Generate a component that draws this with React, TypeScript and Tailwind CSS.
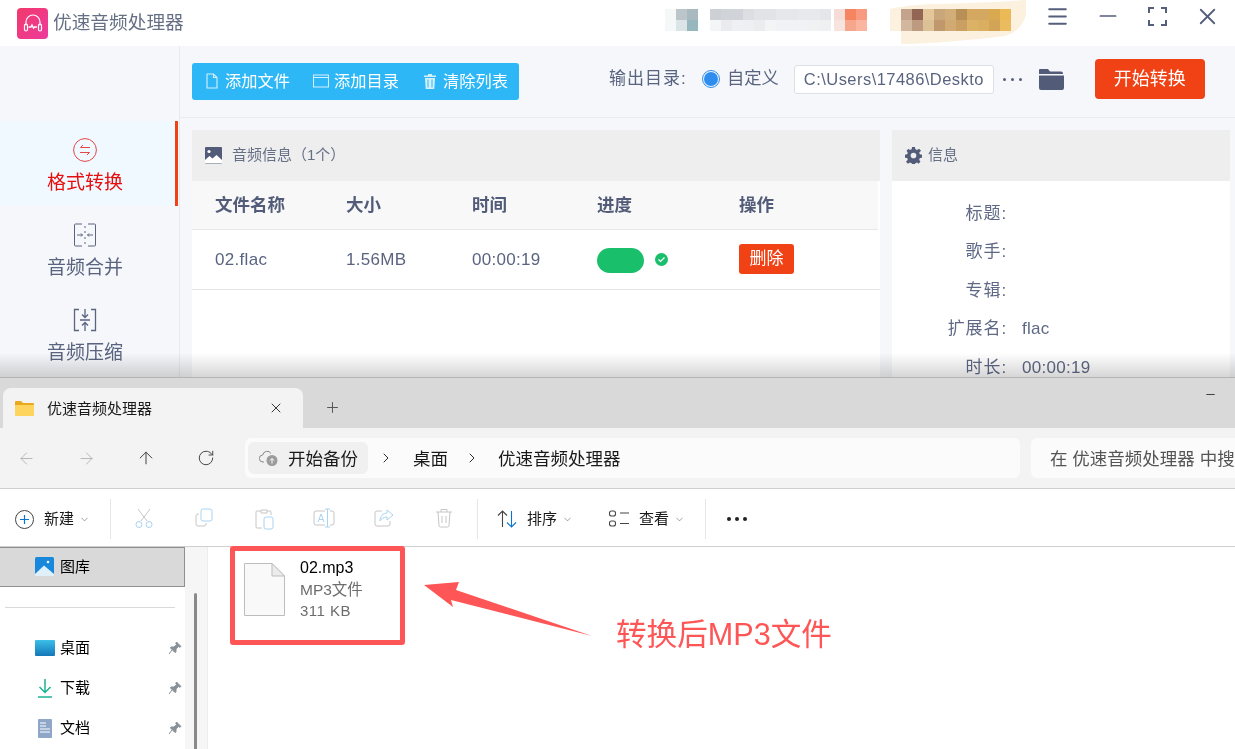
import { ArrowLeft, ArrowRight, ArrowUp, ChevronDown, ChevronRight, Menu, Minus, Plus, RotateCw, X } from "lucide-react";

const mosaicOne = [
  ["#f6f8f8", "#bcc5ca", "#a9b9c0"],
  ["#f5f8f8", "#dbe5e8", "#97b7bf"],
];
const mosaicTwoTop = ["#cdd0d5", "#d0d3d8", "#d0d3d8", "#dcdee2", "#e1e3e7", "#e1e3e7", "#e5e7ea", "#e5e7ea", "#e7e9ec", "#e7e9ec", "#e4e6e9", "#f5dcd6", "#f58460", "#f89a80"];
const mosaicTwoBottom = ["#f3f5f7", "#eaebee", "#eff0f3", "#eeeff2", "#ebecef", "#f3f4f6", "#f1f2f5", "#f1f2f5", "#f1f2f5", "#f0f1f3", "#eef0f2", "#f8e4df", "#f7a68e", "#fab4a0"];
const mosaicThreeTop = ["#c4a38c", "#936553", "#e3c79b", "#c9a77a", "#d1ae79", "#b98f58", "#d4a860", "#d4a860", "#d9a950", "#ebb956"];
const mosaicThreeBottom = ["#d2b79e", "#bd9a80", "#dcc096", "#c0986c", "#d0aa72", "#c9a062", "#dcb266", "#daaf62", "#d3a455", "#ebbb5f"];

function BlurredUser() {
  return (
    <svg width="380" height="46" viewBox="0 0 380 46" className="shrink-0">
      {mosaicOne.map((row, r) => row.map((c, i) => <rect key={`a${r}${i}`} x={i * 11} y={9 + r * 11} width="11" height="11" fill={c} />))}
      {mosaicTwoTop.map((c, i) => <rect key={`b${i}`} x={45 + i * 11 + (i > 10 ? 3 : 0)} y="9" width="11" height="11" fill={c} />)}
      {mosaicTwoBottom.map((c, i) => <rect key={`c${i}`} x={45 + i * 11 + (i > 10 ? 3 : 0)} y="20" width="11" height="11" fill={c} />)}
      <path d="M225 9 Q240 5 270 4 Q320 3 361 0 V14 Q358 30 340 36 Q300 41 245 44 H236 V31 H225 Z" fill="#fbf1de" />
      {mosaicThreeTop.map((c, i) => <rect key={`d${i}`} x={236 + i * 11} y="9" width="11" height="11" fill={c} />)}
      {mosaicThreeBottom.map((c, i) => <rect key={`e${i}`} x={236 + i * 11} y="20" width="11" height="11" fill={c} />)}
    </svg>
  );
}

function NavItem({ label, active, children }: { label: string; active?: boolean; children: React.ReactNode }) {
  return (
    <div className={active ? "h-[85px] flex flex-col items-center pt-[17px] pr-[5px] bg-[#f0f9ff] border-r-[3px] border-[#f04214] mr-[1px] text-[#e60f0f]" : "h-[85px] flex flex-col items-center pt-[17px] pr-[8px] mr-[1px] text-[#5a6480]"}>
      {children}
      <span className="text-[19px] leading-[26px] mt-[8px]">{label}</span>
    </div>
  );
}

function InfoRow({ label, value }: { label: string; value?: string }) {
  return (
    <div className="h-[38.5px] flex items-center">
      <span className="w-[115px] text-right text-[17px] tracking-[.9px] leading-none">{label}:</span>
      <span className="ml-[15px] text-[17px] tracking-[.3px] leading-none">{value}</span>
    </div>
  );
}

function ToolSlot({ children }: { children: React.ReactNode }) {
  return <div className="w-[60px] flex justify-center shrink-0">{children}</div>;
}

function SideRow({ label, children }: { label: string; children: React.ReactNode }) {
  return (
    <div className="h-[40px] flex items-center pl-[35px] pr-[3px]">
      <div className="w-[25px] shrink-0">{children}</div>
      <span className="text-[15px] text-black">{label}</span>
      <svg width="14" height="14" viewBox="0 0 14 14" className="ml-auto">
        <path d="M8.5 1 13 5.5 11.8 6.2 10.5 5.5 8 8 8 11 7 11.5 2.5 7 3 6 6 6 8.5 3.5 7.8 2.2Z M4 9 1 13" fill="#8a9299" stroke="#8a9299" />
      </svg>
    </div>
  );
}

export default function App() {
  return (
    <div className="relative w-[1235px] h-[749px] overflow-hidden bg-white font-['Liberation_Sans','Noto_Sans_CJK_SC',sans-serif]">
      {/* audio tool window */}
      <div className="relative h-[377px] overflow-hidden bg-[#f5f7fa] text-[#5a6480]">
        <header className="h-[46px] bg-white flex items-center pl-[17px]">
          <div className="w-[31px] h-[31px] rounded-[4px] bg-gradient-to-br from-[#f2386a] to-[#ec3b9c] flex items-center justify-center shrink-0">
            <svg width="24" height="24" viewBox="0 0 24 24" fill="none" stroke="#fff" strokeWidth="1.2" strokeLinecap="round">
              <path d="M5 14V11a7 7 0 0 1 14 0v3" />
              <rect x="3.5" y="13" width="3" height="7" rx="1.5" />
              <rect x="17.5" y="13" width="3" height="7" rx="1.5" />
              <path d="M8 16h2l1-2 1.5 3 1-1h2" strokeWidth="1.4" />
            </svg>
          </div>
          <span className="ml-[5px] text-[18.7px] text-[#667085]">优速音频处理器</span>
          <div className="ml-[481px]">
            <BlurredUser />
          </div>
          <div className="absolute right-[14px] top-0 h-[32px] flex items-center text-[#555f7b]">
            <Menu size={25} strokeWidth={1.8} />
            <Minus size={26} strokeWidth={1.6} className="ml-[25px]" />
            <svg width="19" height="19" viewBox="0 0 19 19" fill="none" stroke="currentColor" strokeWidth="2" className="ml-[27px]">
              <path d="M1 6V1h5M13 1h5v5M18 13v5h-5M6 18H1v-5" />
            </svg>
            <X size={27} strokeWidth={1.6} className="ml-[27px]" />
          </div>
        </header>

        <div className="flex h-[331px]">
          <aside className="w-[180px] border-r border-[#e8eaee] pt-[75px] shrink-0">
            <NavItem label="格式转换" active>
              <svg width="24" height="24" viewBox="0 0 24 24" fill="none" stroke="#e64545" strokeWidth="1">
                <circle cx="12" cy="12" r="11.4" />
                <path d="M17 9.5H7.5L10 7M7 14.5h9.5L14 17" />
              </svg>
            </NavItem>
            <NavItem label="音频合并">
              <svg width="24" height="24" viewBox="0 0 24 24" fill="none" stroke="#5a6480" strokeWidth="1">
                <path d="M9 1H2.5A1 1 0 0 0 1.500 2v20a1 1 0 0 0 1 1H9M15 1h6.500a1 1 0 0 1 1 1v20a1 1 0 0 1-1 1H15M12 3v2M12 8v2M12 14v2M12 19v2" />
                <path d="M4 12h5.500L8 10.500M9.500 12 8 13.500M20 12h-5.500L16 10.500M14.500 12 16 13.500" />
              </svg>
            </NavItem>
            <NavItem label="音频压缩">
              <svg width="24" height="24" viewBox="0 0 24 24" fill="none" stroke="#5a6480" strokeWidth="1.3">
                <path d="M6 1.500H1.500v21H6M18 1.500h4.500v21H18" />
                <path d="M12 1v8M9 6.500 12 9.500 15 6.500M7 12h10M12 23v-8M9 17.500 12 14.500 15 17.500" />
              </svg>
            </NavItem>
          </aside>

          <main className="flex-1 min-w-0">
            <div className="h-[72px] flex items-center border-b border-[#e9ebee] pl-[12px]">
              <div className="w-[327px] h-[37px] -mt-[1px] rounded-[3px] bg-[#2eb7f6] text-white flex items-center pl-[14px] text-[16.25px] shrink-0">
                <svg width="12" height="16" viewBox="0 0 12 16" fill="none" stroke="#d5f0fd" strokeWidth="1.1"><path d="M1 1h6.500L11 4.500V15H1ZM7.500 1v3.500H11" /></svg>
                <span className="ml-[7px]">添加文件</span>
                <svg width="16" height="14" viewBox="0 0 16 14" fill="none" stroke="#d5f0fd" strokeWidth="1.1" className="ml-[23px]"><path d="M.5 1h15v12H.5ZM.5 3.500h15" /></svg>
                <span className="ml-[5px]">添加目录</span>
                <svg width="12" height="15" viewBox="0 0 12 15" fill="#d5f0fd" className="ml-[25px]"><path d="M4 0h4v1.500h4V3H0V1.500h4ZM1 4h10l-.7 11H1.700ZM3.500 5.500v8h1v-8Zm4 0v8h1v-8Z" /></svg>
                <span className="ml-[7px]">清除列表</span>
              </div>
              <div className="flex items-center -mt-[5px]">
                <span className="ml-[90px] w-[78px] text-[17px] tracking-[1px] whitespace-nowrap shrink-0">输出目录:</span>
                <span className="ml-[15px] w-[18px] h-[18px] rounded-full border border-[#2f8df0] flex items-center justify-center shrink-0">
                  <span className="w-[14px] h-[14px] rounded-full bg-[#2f8df0]" />
                </span>
                <span className="ml-[7px] text-[17.3px]">自定义</span>
                <div className="ml-[15px] w-[200px] h-[29px] border border-[#dcdfe6] rounded-[3px] bg-white pl-[9px] flex items-center text-[16.5px] tracking-[.45px] overflow-hidden whitespace-nowrap shrink-0">C:\Users\17486\Deskto</div>
                <div className="ml-[9px] flex gap-[5px] shrink-0">
                  <span className="w-[3px] h-[3px] rounded-full bg-[#555f7b]" />
                  <span className="w-[3px] h-[3px] rounded-full bg-[#555f7b]" />
                  <span className="w-[3px] h-[3px] rounded-full bg-[#555f7b]" />
                </div>
                <svg width="25" height="21" viewBox="0 0 25 21" fill="#525c78" className="ml-[17px] shrink-0"><path d="M1 0h8l2 2.500h11a2 2 0 0 1 2 2V5H0V1a1 1 0 0 1 1-1ZM0 6.500h25V19a2 2 0 0 1-2 2H2a2 2 0 0 1-2-2Z" /></svg>
                <div className="ml-[31px] w-[110px] h-[40px] rounded-[4px] bg-[#f04214] text-white text-[18px] flex items-center justify-center shrink-0">开始转换</div>
              </div>
            </div>

            <div className="flex pl-[12px] pt-[12px]">
              <section className="w-[688px] h-[300px] bg-white shrink-0">
                <div className="h-[51px] bg-[#eeeeee] flex items-center pl-[13px] text-[15px]">
                  <svg width="17" height="17" viewBox="0 0 17 17" className="shrink-0"><path fill="#525c78" d="M1 0h15a1 1 0 0 1 1 1v15a1 1 0 0 1-1 1H1a1 1 0 0 1-1-1V1a1 1 0 0 1 1-1Z" /><circle cx="4" cy="4.500" r="1.600" fill="#fff" /><path fill="#fff" d="M0 13 4.500 9l3 2.500L11.500 8 17 13v3.500H0Z" /></svg>
                  <span className="ml-[10px] text-[#667085]">音频信息（1个）</span>
                </div>
                <div className="h-[49px] w-[686px] bg-[#f8f8f8] border-b border-[#e8e8e8] flex items-center font-bold text-[17.5px] text-[#525c78]">
                  <span className="w-[154px] pl-[23px]">文件名称</span>
                  <span className="w-[126px]">大小</span>
                  <span className="w-[125px]">时间</span>
                  <span className="w-[142px]">进度</span>
                  <span>操作</span>
                </div>
                <div className="h-[60px] border-b border-[#e4e4e4] flex items-center text-[17px] tracking-[.3px]">
                  <span className="w-[154px] pl-[23px]">02.flac</span>
                  <span className="w-[126px]">1.56MB</span>
                  <span className="w-[125px]">00:00:19</span>
                  <span className="w-[142px] flex items-center">
                    <span className="w-[47px] h-[25px] mt-[1px] rounded-full bg-[#1abf6c]" />
                    <span className="ml-[11px] w-[13px] h-[13px] rounded-full bg-[#1abf6c] flex items-center justify-center">
                      <svg width="9" height="9" viewBox="0 0 9 9" fill="none" stroke="#fff" strokeWidth="1.2"><path d="M1.500 4.500 3.500 6.500 7.500 2.500" /></svg>
                    </span>
                  </span>
                  <span className="w-[55px] h-[30px] -mt-[2px] rounded-[3px] bg-[#f04214] text-white text-[17px] tracking-normal flex items-center justify-center">删除</span>
                </div>
              </section>
              <section className="ml-[12px] w-[338px] h-[300px] bg-white shrink-0">
                <div className="h-[51px] bg-[#eeeeee] flex items-center pl-[13px] text-[15px]">
                  <svg width="17" height="17" viewBox="0 0 24 24" fill="#525c78" className="shrink-0"><path d="M10 0h4l.7 3.200 2.300 1 2.800-1.800 2.800 2.800L20 8l1 2.300 3 .7v4l-3 .7L20 18l1.800 2.800-2.800 2.800L17 21.800l-2.300 1L14 24h-4l-.7-1.200-2.300-1-2.800 1.800-2.800-2.800L4 18l-1-2.300-3-.7v-4l3-.7L4 8 2.200 5.200 5 2.400 7 4.200l2.300-1ZM12 8a4 4 0 1 0 0 8 4 4 0 0 0 0-8Z" /></svg>
                  <span className="ml-[6px] text-[#667085]">信息</span>
                </div>
                <div className="pt-[13px] text-[#5f6985]">
                  <InfoRow label="标题" />
                  <InfoRow label="歌手" />
                  <InfoRow label="专辑" />
                  <InfoRow label="扩展名" value="flac" />
                  <InfoRow label="时长" value="00:00:19" />
                </div>
              </section>
            </div>
          </main>
        </div>
        {/* window shadow falling on the app below */}
        <div className="absolute left-0 right-0 bottom-0 h-[24px] bg-gradient-to-b from-white to-[#d6d6d6] mix-blend-multiply" />
      </div>

      {/* file explorer window */}
      <div className="h-[372px] border-t border-[#b4b4b4] text-[#1a1a1a] flex flex-col">
        <div className="relative h-[50px] bg-[#d9d9d9] flex items-end pl-[3px] shrink-0">
          <div className="w-[300px] h-[40px] rounded-t-[8px] bg-[#f3f3f3] flex items-center pl-[12px] text-[15px] text-[#1a1a1a]">
            <svg width="19" height="15" viewBox="0 0 19 15" className="shrink-0"><path d="M0 1a1 1 0 0 1 1-1h5l2 2h10a1 1 0 0 1 1 1v2H0Z" fill="#e9a91f" /><path d="M0 4h19v10a1 1 0 0 1-1 1H1a1 1 0 0 1-1-1Z" fill="#fcd45e" /></svg>
            <span className="ml-[13px] pt-[2px]">优速音频处理器</span>
            <X size={16} strokeWidth={1.3} className="ml-[116px]" />
          </div>
          <Plus size={17} strokeWidth={1.4} className="ml-[21px] mb-[12px] text-[#555]" />
          <Minus size={13} strokeWidth={1.3} className="absolute right-[18px] top-[10px] text-black" />
        </div>

        <div className="h-[61px] bg-[#f3f3f3] border-b border-[#cfcfcf] flex items-center shrink-0">
          <ArrowLeft size={19} strokeWidth={1.2} className="ml-[17px] text-[#b4b4b4]" />
          <ArrowRight size={19} strokeWidth={1.2} className="ml-[41px] text-[#b4b4b4]" />
          <ArrowUp size={20} strokeWidth={1.2} className="ml-[40px] text-[#444]" />
          <RotateCw size={18} strokeWidth={1.3} className="ml-[41px] text-[#444]" />
          <div className="ml-[30px] w-[775px] h-[40px] rounded-[6px] bg-[#fbfbfb] flex items-center pl-[3px] text-[17.5px]">
            <div className="w-[120px] h-[32px] rounded-[6px] bg-[#f0f0f0] flex items-center pl-[11px] shrink-0">
              <svg width="19" height="17" viewBox="0 0 19 17" className="shrink-0"><path d="M5 12H4a3.500 3.500 0 0 1-.3-7A4.500 4.500 0 0 1 12 3.500" fill="none" stroke="#8a8a8a" strokeWidth="1" /><circle cx="13" cy="10.500" r="5.500" fill="#9b9b9b" /><path d="M13 13.500v-5M11 10.500l2-2 2 2" fill="none" stroke="#fff" strokeWidth="1" /></svg>
              <span className="ml-[10px] pt-[2px]">开始备份</span>
            </div>
            <ChevronRight size={16} strokeWidth={1.4} className="ml-[10px]" />
            <span className="ml-[19px] pt-[2px]">桌面</span>
            <ChevronRight size={16} strokeWidth={1.4} className="ml-[16px]" />
            <span className="ml-[18px] pt-[2px]">优速音频处理器</span>
          </div>
          <div className="ml-[11px] flex-1 h-[40px] rounded-l-[6px] bg-[#fbfbfb] flex items-center pl-[19px] pt-[2px] text-[17.5px] text-[#555] whitespace-nowrap overflow-hidden">在 优速音频处理器 中搜</div>
        </div>

        <div className="h-[58px] bg-white border-b border-[#cfcfcf] flex items-center pt-[3px] text-[15px] shrink-0">
          <svg width="19" height="19" viewBox="0 0 19 19" fill="none" className="ml-[15px] shrink-0"><circle cx="9.500" cy="9.500" r="9" stroke="#444" /><path d="M9.500 5v9M5 9.500h9" stroke="#0a74d0" strokeWidth="1.2" /></svg>
          <span className="ml-[10px]">新建</span>
          <ChevronDown size={11} strokeWidth={1.2} className="ml-[5px] text-[#555]" />
          <div className="ml-[20px] w-px h-[40px] bg-[#e6e6e6]" />
          <div className="ml-[3px] flex">
            <ToolSlot>
              <svg width="20" height="20" viewBox="0 0 20 20" fill="none" strokeWidth="1"><path d="M4 1 13 13M16 1 7 13" stroke="#c6c6c6" /><circle cx="5" cy="16.500" r="3" stroke="#a9d3f2" /><circle cx="15" cy="16.500" r="3" stroke="#a9d3f2" /></svg>
            </ToolSlot>
            <ToolSlot>
              <svg width="20" height="20" viewBox="0 0 20 20" fill="none" strokeWidth="1"><rect x="7" y="1" width="11" height="12" rx="2" stroke="#a9d3f2" /><path d="M5 6H4a2 2 0 0 0-2 2v8a2 2 0 0 0 2 2h6a2 2 0 0 0 2-2v-1" stroke="#c6c6c6" /></svg>
            </ToolSlot>
            <ToolSlot>
              <svg width="20" height="22" viewBox="0 0 20 22" fill="none" strokeWidth="1"><path d="M7 3H3a1 1 0 0 0-1 1v15a1 1 0 0 0 1 1h5M13 3h3a1 1 0 0 1 1 1v3M7 2h6v3H7Z" stroke="#c6c6c6" /><rect x="10" y="9" width="9" height="12" rx="2" stroke="#a9d3f2" /></svg>
            </ToolSlot>
            <ToolSlot>
              <svg width="22" height="20" viewBox="0 0 22 20" fill="none" strokeWidth="1"><path d="M12 3H3a2 2 0 0 0-2 2v10a2 2 0 0 0 2 2h9M17 3h2a2 2 0 0 1 2 2v10a2 2 0 0 1-2 2h-2" stroke="#c6c6c6" /><path d="M12 1h5M12 19h5M14.500 1v18M5 14l3-8 3 8M6 11.500h4" stroke="#a9d3f2" /></svg>
            </ToolSlot>
            <ToolSlot>
              <svg width="20" height="20" viewBox="0 0 20 20" fill="none" strokeWidth="1"><path d="M8 3H3a2 2 0 0 0-2 2v11a2 2 0 0 0 2 2h11a2 2 0 0 0 2-2v-3" stroke="#c6c6c6" /><path d="M13 2l6 5-6 5V9c-4 0-6 2-7 4 0-5 3-7.500 7-8Z" stroke="#a9d3f2" /></svg>
            </ToolSlot>
            <ToolSlot>
              <svg width="18" height="20" viewBox="0 0 18 20" fill="none" stroke="#c6c6c6" strokeWidth="1"><path d="M1 4h16M6 4V1.500h6V4M3 4l1 13.500a1.500 1.500 0 0 0 1.500 1.500h7a1.500 1.500 0 0 0 1.500-1.500L15 4M7 8v7M11 8v7" /></svg>
            </ToolSlot>
          </div>
          <div className="ml-[3px] w-px h-[40px] bg-[#e6e6e6]" />
          <svg width="20" height="20" viewBox="0 0 20 20" fill="none" className="ml-[19px] shrink-0"><path d="M5.500 18V2M1 6.500 5.500 2 10 6.500" stroke="#444" strokeWidth="1.100" /><path d="M14.500 2v16M10 13.500l4.500 4.500 4.500-4.500" stroke="#0a74d0" strokeWidth="1.100" /></svg>
          <span className="ml-[10px]">排序</span>
          <ChevronDown size={11} strokeWidth={1.2} className="ml-[5px] text-[#555]" />
          <svg width="20" height="18" viewBox="0 0 20 18" fill="none" stroke="#444" strokeWidth="1.100" className="ml-[36px] shrink-0"><rect x=".5" y="1" width="6" height="5" rx="2" /><rect x=".5" y="11" width="6" height="5" rx="2" /><path d="M11 3h9M11 13.500h9" /></svg>
          <span className="ml-[10px]">查看</span>
          <ChevronDown size={11} strokeWidth={1.2} className="ml-[5px] text-[#555]" />
          <div className="ml-[20px] w-px h-[40px] bg-[#e6e6e6]" />
          <div className="ml-[21px] flex gap-[4px]">
            <span className="w-[4px] h-[4px] rounded-full bg-[#222]" />
            <span className="w-[4px] h-[4px] rounded-full bg-[#222]" />
            <span className="w-[4px] h-[4px] rounded-full bg-[#222]" />
          </div>
        </div>

        <div className="flex-1 min-h-0 flex bg-white">
          <div className="w-[185px] shrink-0">
            <div className="h-[40px] bg-[#d9d9d9] border-y border-r border-[#8f8f8f] flex items-center pl-[35px] text-[15px] text-black">
              <svg width="20" height="20" viewBox="0 0 20 20" className="shrink-0"><rect width="19" height="19" rx="1.500" fill="#1888dd" /><path d="M0 17 9 8.500 19 17v2H0Z" fill="#dff0fb" /><circle cx="13" cy="5" r="1.300" fill="#fff" /></svg>
              <span className="ml-[5px]">图库</span>
            </div>
            <div className="h-px mx-[5px] mt-[20px] mb-[20px] w-[170px] bg-[#d9d9d9]" />
            <SideRow label="桌面">
              <div className="w-[20px] h-[16px] rounded-[1px] bg-gradient-to-b from-[#3cc0e8] to-[#1477b8] relative" />
            </SideRow>
            <SideRow label="下载">
              <svg width="16" height="19" viewBox="0 0 16 19" fill="none" stroke="#1cb394" strokeWidth="1.500" className="ml-[2px]"><path d="M8 0v13M2.500 8 8 13.500 13.500 8M1 18h14" /></svg>
            </SideRow>
            <SideRow label="文档">
              <svg width="14" height="19" viewBox="0 0 14 19" className="ml-[3px]"><rect width="14" height="19" rx="1" fill="#8ea6c8" /><path d="M2 4h6M2 7h6M2 10h10M2 13h10" stroke="#fff" /></svg>
            </SideRow>
          </div>
          <div className="w-[23px] bg-[#f6f6f6] border-r border-[#ececec] pl-[9px] pt-[46px] shrink-0">
            <div className="w-[3px] h-[160px] rounded-full bg-[#8a8a8a]" />
          </div>
          <div className="flex-1 relative">
            <div className="ml-[36px] mt-[16px] flex items-start">
              <svg width="41" height="53" viewBox="0 0 41 53" className="shrink-0"><path d="M.5.500H28L40.500 13V52.500H.5Z" fill="#f9f9f9" stroke="#bdbdbd" /><path d="M28 .500V13H40.500Z" fill="#ececec" stroke="#bdbdbd" /></svg>
              <div className="ml-[15px] -mt-[6px] text-[16px] leading-[21px]">
                <div className="text-black">02.mp3</div>
                <div className="text-[#6d6d6d] mt-[1px] text-[15.5px]">MP3文件</div>
                <div className="text-[#6d6d6d] text-[15px] tracking-[.5px]">311 KB</div>
              </div>
            </div>
          </div>
        </div>
      </div>

      {/* red annotations drawn over the screenshot */}
      <div className="absolute left-[230px] top-[546px] w-[175px] h-[99px] border-[5px] border-[#fe5656] rounded-[3px]" />
      <svg width="180" height="65" viewBox="0 0 180 65" className="absolute left-[420px] top-[578px]">
        <path d="M4 7 39 4 36 12 172 58 31 22 33 29 4 7Z" fill="#fe5656" />
      </svg>
      <div className="absolute left-[616px] top-[614px] text-[30.6px] leading-[40px] text-[#fe5656] whitespace-nowrap">转换后MP3文件</div>
    </div>
  );
}
